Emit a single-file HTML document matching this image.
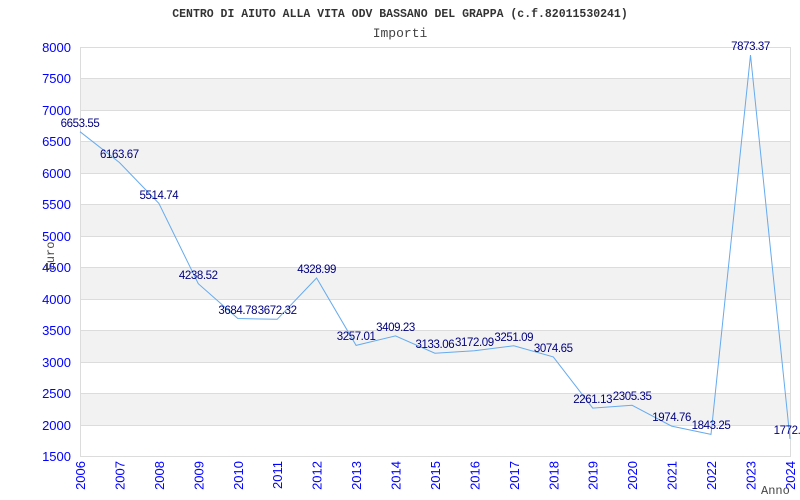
<!DOCTYPE html>
<html><head><meta charset="utf-8"><style>
html,body{margin:0;padding:0;background:#fff;}
svg{display:block;}
</style></head><body>
<svg width="800" height="500" xmlns="http://www.w3.org/2000/svg">
<rect width="800" height="500" fill="#fff"/>
<text x="400" y="17" text-anchor="middle" font-family="Liberation Mono, monospace" font-size="11.5" font-weight="bold" fill="#333">CENTRO DI AIUTO ALLA VITA ODV BASSANO DEL GRAPPA (c.f.82011530241)</text>
<text x="400" y="37" text-anchor="middle" font-family="Liberation Mono, monospace" font-size="13" fill="#444">Importi</text>
<g fill="#f2f2f2">
<rect x="80" y="78.5" width="710" height="31.5"/>
<rect x="80" y="141.5" width="710" height="31.5"/>
<rect x="80" y="204.5" width="710" height="31.5"/>
<rect x="80" y="267.5" width="710" height="31.5"/>
<rect x="80" y="330.5" width="710" height="31.5"/>
<rect x="80" y="393.5" width="710" height="31.5"/>
</g>
<g stroke="#dcdcdc" stroke-width="1">
<line x1="80" y1="47.5" x2="790" y2="47.5"/><line x1="80" y1="78.5" x2="790" y2="78.5"/>
<line x1="80" y1="110.5" x2="790" y2="110.5"/><line x1="80" y1="141.5" x2="790" y2="141.5"/>
<line x1="80" y1="173.5" x2="790" y2="173.5"/><line x1="80" y1="204.5" x2="790" y2="204.5"/>
<line x1="80" y1="236.5" x2="790" y2="236.5"/><line x1="80" y1="267.5" x2="790" y2="267.5"/>
<line x1="80" y1="299.5" x2="790" y2="299.5"/><line x1="80" y1="330.5" x2="790" y2="330.5"/>
<line x1="80" y1="362.5" x2="790" y2="362.5"/><line x1="80" y1="393.5" x2="790" y2="393.5"/>
<line x1="80" y1="425.5" x2="790" y2="425.5"/><line x1="80" y1="456.5" x2="790" y2="456.5"/>
<line x1="80.5" y1="47" x2="80.5" y2="457"/><line x1="790.5" y1="47" x2="790.5" y2="457"/>
</g>
<g font-family="Liberation Sans, sans-serif" font-size="13" fill="#0000ff" text-anchor="end">
<text x="71" y="52">8000</text><text x="71" y="83">7500</text><text x="71" y="115">7000</text>
<text x="71" y="146">6500</text><text x="71" y="178">6000</text><text x="71" y="209">5500</text>
<text x="71" y="241">5000</text><text x="71" y="272">4500</text><text x="71" y="304">4000</text>
<text x="71" y="335">3500</text><text x="71" y="367">3000</text><text x="71" y="398">2500</text>
<text x="71" y="430">2000</text><text x="71" y="461">1500</text>
</g>
<g font-family="Liberation Sans, sans-serif" font-size="13" fill="#0000ff" text-anchor="end">
<text transform="translate(85,461) rotate(-90)">2006</text>
<text transform="translate(124.4,461) rotate(-90)">2007</text>
<text transform="translate(163.9,461) rotate(-90)">2008</text>
<text transform="translate(203.3,461) rotate(-90)">2009</text>
<text transform="translate(242.8,461) rotate(-90)">2010</text>
<text transform="translate(282.2,461) rotate(-90)">2011</text>
<text transform="translate(321.6,461) rotate(-90)">2012</text>
<text transform="translate(361.1,461) rotate(-90)">2013</text>
<text transform="translate(400.5,461) rotate(-90)">2014</text>
<text transform="translate(439.9,461) rotate(-90)">2015</text>
<text transform="translate(479.4,461) rotate(-90)">2016</text>
<text transform="translate(518.8,461) rotate(-90)">2017</text>
<text transform="translate(558.3,461) rotate(-90)">2018</text>
<text transform="translate(597.7,461) rotate(-90)">2019</text>
<text transform="translate(637.1,461) rotate(-90)">2020</text>
<text transform="translate(676.6,461) rotate(-90)">2021</text>
<text transform="translate(716,461) rotate(-90)">2022</text>
<text transform="translate(755.5,461) rotate(-90)">2023</text>
<text transform="translate(795,461) rotate(-90)">2024</text>
</g>
<text transform="translate(54,256) rotate(-90)" text-anchor="middle" font-family="Liberation Mono, monospace" font-size="12" fill="#444">Euro</text>
<text x="761" y="494" font-family="Liberation Mono, monospace" font-size="12" fill="#444">Anno</text>
<polyline fill="none" stroke="#66aaee" stroke-width="1" points="80,131.7 119.4,162.5 158.9,203.4 198.3,283.7 237.8,318.5 277.2,319.3 316.6,278 356.1,345.4 395.5,335.9 434.9,353.2 474.4,350.8 513.8,345.8 553.3,356.9 592.7,408.1 632.1,405.3 671.6,426.1 711,434.4 750.5,55 790,438.9"/>
<g font-family="Liberation Sans, sans-serif" font-size="11.5" letter-spacing="-0.4" fill="#000080" text-anchor="middle">
<text x="80" y="127">6653.55</text><text x="119.4" y="158">6163.67</text>
<text x="158.9" y="199">5514.74</text><text x="198.3" y="279">4238.52</text>
<text x="237.8" y="314">3684.78</text><text x="277.2" y="314">3672.32</text>
<text x="316.6" y="273">4328.99</text><text x="356.1" y="340">3257.01</text>
<text x="395.5" y="331">3409.23</text><text x="434.9" y="348">3133.06</text>
<text x="474.4" y="346">3172.09</text><text x="513.8" y="341">3251.09</text>
<text x="553.3" y="352">3074.65</text><text x="592.7" y="403">2261.13</text>
<text x="632.1" y="400">2305.35</text><text x="671.6" y="421">1974.76</text>
<text x="711" y="429">1843.25</text><text x="750.5" y="50">7873.37</text>
<text x="790" y="434">1772.0</text>
</g>
</svg>
</body></html>
